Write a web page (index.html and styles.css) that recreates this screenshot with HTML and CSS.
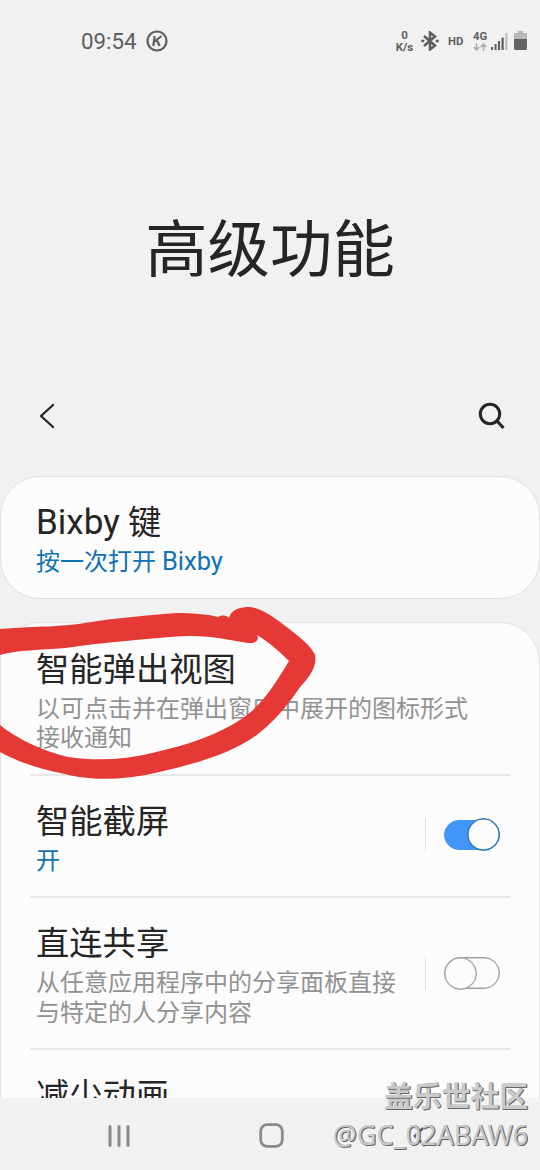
FILE: index.html
```html
<!DOCTYPE html>
<html lang="zh-CN">
<head>
<meta charset="utf-8">
<title>高级功能</title>
<link rel="stylesheet" href="styles.css">
</head>
<body>
<div class="phone">
  <header class="status">
    <span class="clock">09:54</span>
    <svg class="k-icon" width="22" height="22" viewBox="0 0 22 22" fill="none" stroke="#5e5e5e"><circle cx="11" cy="11" r="9.500" stroke-width="2.200"/><path d="M8.700 6 7.300 16M15.500 6 8 12M10.700 10.200 13.800 16" stroke-width="2.200"/></svg>
    <div class="indicators">
      <span class="speed"><span>0</span><span>K/s</span></span>
      <svg class="bt" width="18" height="20" viewBox="0 0 18 20" fill="none" stroke="#5e5e5e" stroke-width="2.500"><path d="m3 5 11 9.500-5 4v-17l5 4L3 15"/><path d="M.3 10h3M14.700 10h3"/></svg>
      <span class="hd">HD</span>
      <span class="net"><span>4G</span><svg width="14" height="8" viewBox="0 0 14 8" fill="none" stroke="#adadad" stroke-width="1.600"><path d="M3.500 0v7M.8 4l2.700 3 2.700-3M10.500 8V1M7.800 4l2.700-3 2.700 3"/></svg></span>
      <svg class="signal" width="17" height="17" viewBox="0 0 17 17"><path fill="#5e5e5e" d="M0 14h2v3H0zM3.600 11h2v6h-2zM7 8h2v9H7zM10.500 4.500h2.200V17h-2.200z"/><path fill="#bdbdbd" d="M14.200 0h2.200v17h-2.200z"/></svg>
      <svg class="battery" width="13" height="19" viewBox="0 0 13 19"><path fill="#b8b8b8" d="M4 0h5v2h4v7H0V2h4z"/><path fill="#626262" d="M0 8h13v9.500q0 1.500-1.500 1.500h-10Q0 19 0 17.500z"/></svg>
    </div>
  </header>
  <h1 class="heading">高级功能</h1>
  <div class="toolbar">
    <svg width="18" height="26" viewBox="0 0 18 26" fill="none" stroke="#252525" stroke-width="2.300"><path d="M15 2 3 13l12 11" stroke-linecap="round" stroke-linejoin="round"/></svg>
    <svg width="28" height="28" viewBox="0 0 28 28" fill="none" stroke="#252525"><circle cx="12" cy="12" r="9.700" stroke-width="3"/><path d="m19 19 6.500 7" stroke-width="3.200"/></svg>
  </div>
  <main class="list">
    <section class="card single">
      <div class="row">
        <div class="text"><h2><span class="latin">Bixby</span> 键</h2><p class="blue">按一次打开 <span class="latin">Bixby</span></p></div>
      </div>
    </section>
    <section class="card group">
      <div class="row tall"><div class="text"><h2>智能弹出视图</h2><p>以可点击并在弹出窗口中展开的图标形式<br>接收通知</p></div></div>
      <div class="row"><div class="text"><h2>智能截屏</h2><p class="blue">开</p></div><div class="control"><span class="switch on"><i></i></span></div></div>
      <div class="row tall"><div class="text"><h2>直连共享</h2><p>从任意应用程序中的分享面板直接<br>与特定的人分享内容</p></div><div class="control"><span class="switch"><i></i></span></div></div>
      <div class="row"><div class="text"><h2>减少动画</h2></div></div>
    </section>
  </main>
  <nav class="nav">
    <svg width="22" height="24" viewBox="0 0 22 24" fill="none" stroke="#8a8a8a" stroke-width="3" stroke-linecap="round"><path d="M2 2.500v19M11 2.500v19M20 2.500v19"/></svg>
    <svg width="25" height="25" viewBox="0 0 25 25" fill="none" stroke="#8a8a8a" stroke-width="2.800"><rect x="1.700" y="1.700" width="21.600" height="21.600" rx="6.500"/></svg>
    <svg width="16" height="24" viewBox="0 0 16 24" fill="none" stroke="#606060" stroke-width="2.600"><path d="M13 2 3 12l10 10"/></svg>
  </nav>
  <svg class="scribble" width="340" height="190" viewBox="0 0 340 190"><path fill="#e53935" d="M0 29C40 26 60 27 85 23C115 18 150 15 177 13C190 13 207 14 218 17C222 15 226 15 229 18C231 9 241 7 250 7C262 8 275 18 288 28C300 37 312 47 315 55C317 67 310 76 301 86C292 98 280 117 258 134C230 155 190 165 155 173C125 180 90 181 65 174C40 169 20 163 0 152V125C17 139 43 151 68 157C95 161 125 160 152 153C188 145 220 134 243 118C264 103 276 82 289 61C280 52 270 43 257 35C260 40 255 44 248 43L230 40C210 36 190 35 170 37C135 40 100 43 65 48C40 50 18 50 0 55Z"/></svg>
  <div class="watermark"><span class="community">盖乐世社区</span><span class="user">@GC_02ABAW6</span></div>
</div>
</body>
</html>
```
FILE: styles.css
```css
* { box-sizing: border-box; }
body { margin: 0; background: #f1f1f1; }
h1, h2, p { margin: 0; font-weight: 400; }
svg { display: block; flex: none; }
.phone {
  position: relative; width: 540px; height: 1170px; overflow: hidden;
  display: flex; flex-direction: column; background: #f1f1f1; color: #252525;
  font-family: Roboto, "Noto Sans CJK SC", sans-serif;
}
.status { height: 82px; flex: none; display: flex; align-items: center; padding: 0 13px 0 81px; color: #5e5e5e; }
.clock { font-size: 22.3px; line-height: 28px; width: 65px; }
.indicators { margin-left: auto; display: flex; align-items: center; }
.speed { display: flex; flex-direction: column; align-items: center; font-size: 11.5px; line-height: 12px; font-weight: 700; width: 19px; }
.bt { margin-left: 7px; }
.hd { margin-left: 9px; width: 17px; font-size: 11.3px; font-weight: 700; }
.net { margin-left: 8px; width: 15px; font-size: 11.3px; line-height: 11px; font-weight: 700; display: flex; flex-direction: column; gap: 1px; }
.signal { margin: 1px 0 0 3px; }
.battery { margin: -1px 0 0 6px; }
.heading { flex: none; height: 298px; padding-top: 119px; font-size: 62.4px; line-height: 100px; text-align: center; }
.toolbar { flex: none; height: 96px; padding: 0 34px 24px 38px; display: flex; align-items: center; justify-content: space-between; }
.list { height: 622px; flex: none; overflow: hidden; display: flex; flex-direction: column; gap: 24px; }
.card { flex: none; background: #fcfcfc; border: 1px solid #e1e1e1; }
.single { height: 123px; border-radius: 40px; }
.group { height: 540px; border-radius: 40px 40px 0 0; margin-top: -1px; }
.row { height: 122px; margin: 0 29px; padding: 25px 6px 0; display: flex; justify-content: space-between; }
.tall { height: 152px; }
.group .row + .row { border-top: 2px solid #e7e7e7; padding-top: 25px; }
.group .row:first-child { height: 151px; padding-top: 26px; }
.text { white-space: nowrap; }
h2 { font-size: 33.3px; line-height: 42px; }
p { margin-top: 4px; font-size: 24px; line-height: 29.5px; color: #929292; }
.group .row:first-child p { margin-top: 3.5px; }
.blue { color: #0f72b4; }
h2 .latin { font-size: 35px; line-height: 1; }
p .latin { font-size: 25.5px; line-height: 1; }
.control { height: 33px; align-self: center; margin: -28px 4px 0 0; padding-left: 18px; border-left: 1px solid #dedede; display: flex; align-items: center; }
.tall .control { margin-top: -25px; }
.switch { width: 56px; height: 32px; border: 1.500px solid #9c9c9c; border-radius: 16px; display: flex; align-items: center; box-shadow: inset 0 0 0 .5px #aaa; }
.switch i { flex: none; width: 33px; height: 33px; margin-left: -1px; border: 1.500px solid #9c9c9c; border-radius: 50%; background: #fcfcfc; box-shadow: inset 0 0 0 .5px #aaa; }
.on { background: #4296fb; border-color: #4296fb; height: 30px; box-shadow: none; }
.on i { margin-left: 22px; border-color: #1268ac; box-shadow: inset 0 0 0 .5px #1268ac; }
.nav { height: 72px; padding: 3px 112px 0 108px; display: flex; align-items: center; justify-content: space-between; }
.scribble { position: absolute; left: 0; top: 600px; }
.watermark { position: absolute; right: 12px; top: 1075px; display: flex; flex-direction: column; align-items: flex-end; color: #cacaca; text-shadow: 1px 1px 0 #666, 1px 0 0 #777, -1px -1px 0 #f5f5f5; white-space: nowrap; }
.community { font: 700 28.8px/40px "Noto Sans CJK SC", sans-serif; }
.user { font: 400 27px/39px "Noto Sans", sans-serif; }
```
